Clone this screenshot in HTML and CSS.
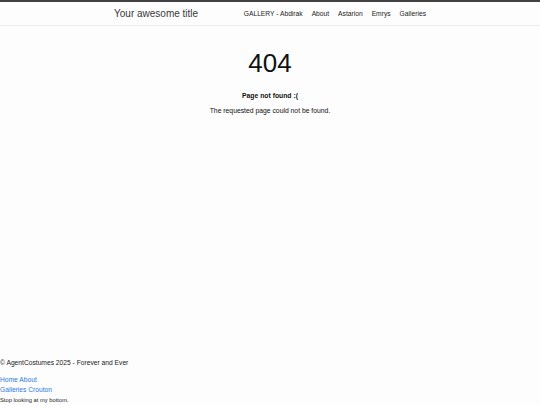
FILE: index.html
```html
<!DOCTYPE html>
<html lang="en">
<head>
    <meta charset="UTF-8">
    <meta name="viewport" content="width=device-width, initial-scale=1.0">
    <title>404 - Your awesome title</title>
    <link rel="stylesheet" href="styles.css">
</head>
<body>
    <header class="site-header">
        <div class="wrapper">
            <a class="site-title" href="#">Your awesome title</a>
            <nav class="site-nav">
                <a href="#">GALLERY - Abdirak</a>
                <a href="#">About</a>
                <a href="#">Astarion</a>
                <a href="#">Emrys</a>
                <a href="#">Galleries</a>
            </nav>
        </div>
    </header>

    <main class="page-content">
        <h1 class="error-code">404</h1>
        <p class="error-title">Page not found :(</p>
        <p class="error-text">The requested page could not be found.</p>
    </main>

    <footer class="site-footer">
        <p class="copyright">&copy; AgentCostumes 2025 - Forever and Ever</p>
        <div class="footer-links"><a href="#">Home</a> <a href="#">About</a></div>
        <div class="footer-links"><a href="#">Galleries</a> <a href="#">Crouton</a></div>
        <p class="footer-note">Stop looking at my bottom.</p>
    </footer>
</body>
</html>
```

FILE: styles.css
```css
html, body {
    height: 100%;
}
body {
    font-family: "Liberation Sans", Arial, sans-serif;
    margin: 0;
    padding: 0;
    background-color: #fdfdfd;
    color: #111;
    display: flex;
    flex-direction: column;
}
a {
    text-decoration: none;
}
.site-header {
    border-top: 2px solid #424242;
    border-bottom: 1px solid #ececec;
}
.wrapper {
    width: 312px;
    height: 23px;
    margin: 0 auto;
    display: flex;
    align-items: center;
    justify-content: space-between;
}
.site-title {
    font-size: 10px;
    color: #3a3a3a;
}
.site-nav {
    display: flex;
    gap: 9px;
}
.site-nav a {
    font-size: 6.7px;
    color: #222;
}
.page-content {
    flex: 1;
    text-align: center;
}
.error-code {
    font-size: 26px;
    font-weight: normal;
    line-height: 30px;
    margin: 22px 0 0;
}
.error-title {
    font-size: 6.8px;
    font-weight: bold;
    line-height: 10px;
    margin: 13px 0 0;
}
.error-text {
    font-size: 6.8px;
    line-height: 10px;
    margin: 5px 0 0;
}
.site-footer {
    font-size: 6.7px;
    line-height: 10px;
    color: #222;
}
.copyright {
    margin: 0 0 7px;
    padding-top: 1px;
}
.footer-links a {
    color: #2a7ae2;
}
.footer-note {
    font-size: 5.8px;
    margin: 0;
}
```
